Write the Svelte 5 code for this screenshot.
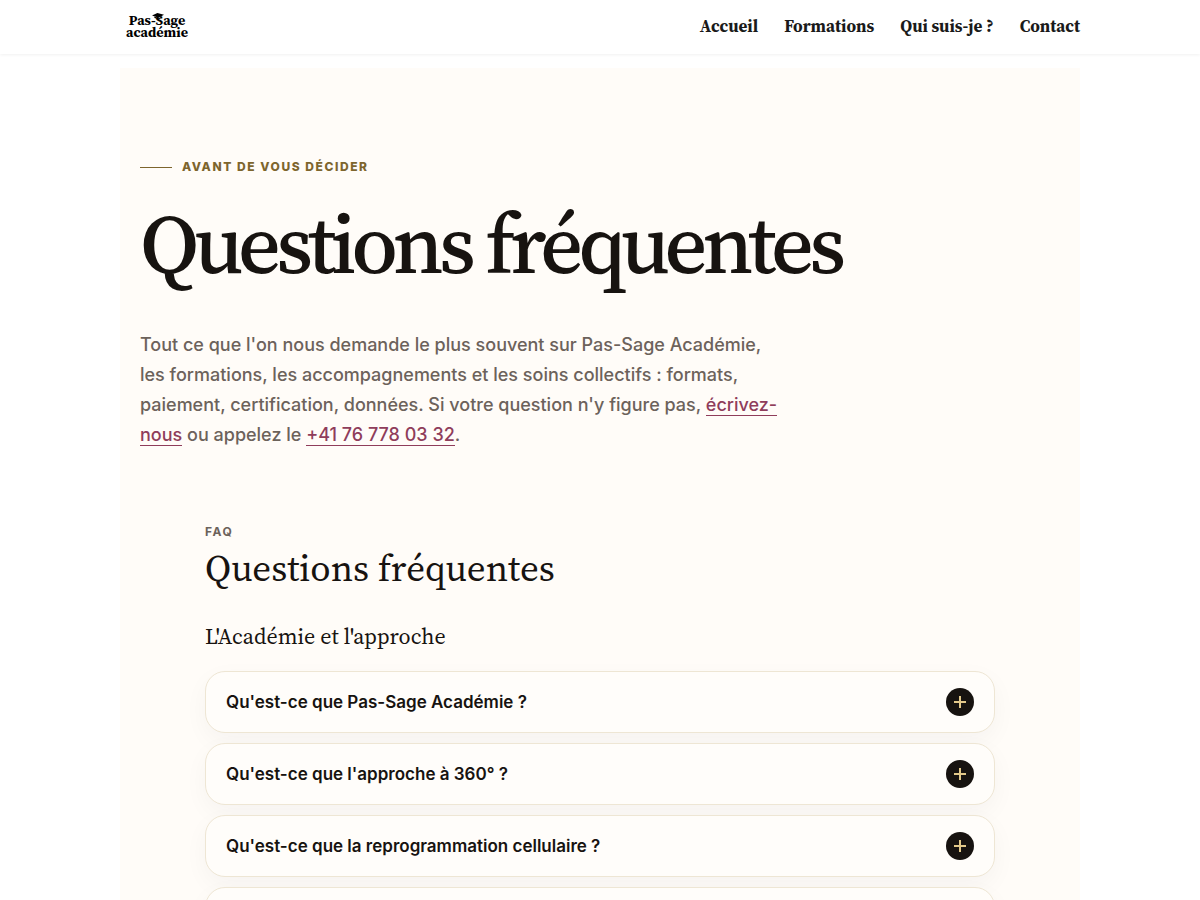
<script lang="ts">
  const links = [
    { label: 'Accueil', href: '#accueil' },
    { label: 'Formations', href: '#formations' },
    { label: 'Qui suis-je ?', href: '#qui-suis-je' },
    { label: 'Contact', href: '#contact' }
  ];

  const questions = [
    "Qu'est-ce que Pas-Sage Académie ?",
    "Qu'est-ce que l'approche à 360° ?",
    "Qu'est-ce que la reprogrammation cellulaire ?",
    ''
  ];

  let open = $state(-1);
</script>

<header>
  <div class="bar">
    <a href="#accueil" class="logo">
      <span>Pas-Sage</span>
      <span>académie</span>
      <svg class="cap" viewBox="0 0 12 8" aria-hidden="true">
        <path d="M0 2.6 5.4 0 12 1.8 6.6 4.8Z" />
        <path d="M2.4 3.6 6.6 5.2 9.8 3.4V5L6.6 6.2 2.4 5Z" />
      </svg>
    </a>
    <nav>
      {#each links as l (l.href)}
        <a href={l.href}>{l.label}</a>
      {/each}
    </nav>
  </div>
</header>

<main>
  <section class="hero">
    <p class="eyebrow">Avant de vous décider</p>
    <h1>Questions fréquentes</h1>
    <p class="lead">
      Tout ce que l'on nous demande le plus souvent sur Pas-Sage Académie, les formations, les
      accompagnements et les soins collectifs : formats, paiement, certification, données. Si votre
      question n'y figure pas, <a href="#contact">écrivez-nous</a> ou appelez le
      <a href="tel:+41767780332">+41 76 778 03 32</a>.
    </p>
  </section>

  <section class="faq">
    <p class="kicker">FAQ</p>
    <h2>Questions fréquentes</h2>
    <h3>L'Académie et l'approche</h3>
    <div class="list">
      {#each questions as q, i (i)}
        <button type="button" aria-expanded={open === i} onclick={() => (open = open === i ? -1 : i)}>
          <span>{q}</span>
          <svg class="icon" viewBox="0 0 28 28" aria-hidden="true">
            <circle cx="14" cy="14" r="14" />
            <path d={open === i ? 'M8 14h12' : 'M8 14h12M14 8v12'} />
          </svg>
        </button>
      {/each}
    </div>
  </section>
</main>

<style>
  :global(body) { background: #fff; color: #171310; font-family: Inter, sans-serif; }
  h1, h2, h3, p { margin: 0; }
  h1, h2, h3, .logo, nav a {
    font-family: "Source Serif 4 Display", "Source Serif 4", "Liberation Serif", serif;
    font-variation-settings: "opsz" 60;
  }

  header { background: #fff; box-shadow: 0 1px 3px rgba(0, 0, 0, 0.06); }
  .bar {
    display: flex; align-items: center; justify-content: space-between;
    max-width: 960px; margin: 0 auto; box-sizing: border-box; padding: 14px 0 16px 6px;
  }
  .logo {
    position: relative; display: grid; justify-items: center;
    font-size: 14px; line-height: 12px; font-weight: 700;
    color: #000; text-decoration: none;
  }
  .cap { position: absolute; top: -1px; left: 26px; width: 12px; height: 8px; }
  nav { display: flex; gap: 26px; }
  nav a { font-size: 17px; line-height: 24px; font-weight: 700; color: #1a1a1a; text-decoration: none; }

  main {
    max-width: 960px; margin: 14px auto 0; padding: 88px 20px 60px;
    box-sizing: border-box; background: #fffcf8;
  }
  .eyebrow {
    display: flex; align-items: center; gap: 10px;
    font-size: 12px; line-height: 22px; font-weight: 800; letter-spacing: 0.13em;
    text-transform: uppercase; color: #7d652d;
  }
  .eyebrow::before { content: ''; width: 32px; height: 1px; background: #7d652d; }
  h1 { margin-top: 22px; font-size: 84px; line-height: 88px; font-weight: 500; letter-spacing: -5px; }
  .lead { max-width: 640px; margin-top: 42px; font-size: 18px; line-height: 30px; font-weight: 500; color: #6c625b; }
  .lead a { color: #8f3d5b; text-decoration: none; border-bottom: 1px solid; }

  .faq { max-width: 790px; margin: 70px auto 0; }
  .kicker { font-size: 12px; line-height: 24px; font-weight: 700; letter-spacing: 0.13em; color: #6c625b; }
  h2 { font-size: 37px; line-height: 48px; font-weight: 400; }
  h3 { margin-top: 28px; font-size: 22px; line-height: 32px; font-weight: 400; }
  .list { display: grid; gap: 10px; margin-top: 19px; }
  button {
    display: flex; align-items: center; justify-content: space-between;
    padding: 16px 20px; border: 1px solid #eee6d4; border-radius: 20px;
    background: #fffdfa; box-shadow: 0 8px 24px rgba(23, 19, 40, 0.04);
    font: 600 17px/28px Inter, sans-serif; color: #171310; text-align: left; cursor: pointer;
  }
  .icon { width: 28px; height: 28px; flex: none; }
  .icon circle { fill: #171310; }
  .icon path { fill: none; stroke: #e3c98a; stroke-width: 2; }
</style>
